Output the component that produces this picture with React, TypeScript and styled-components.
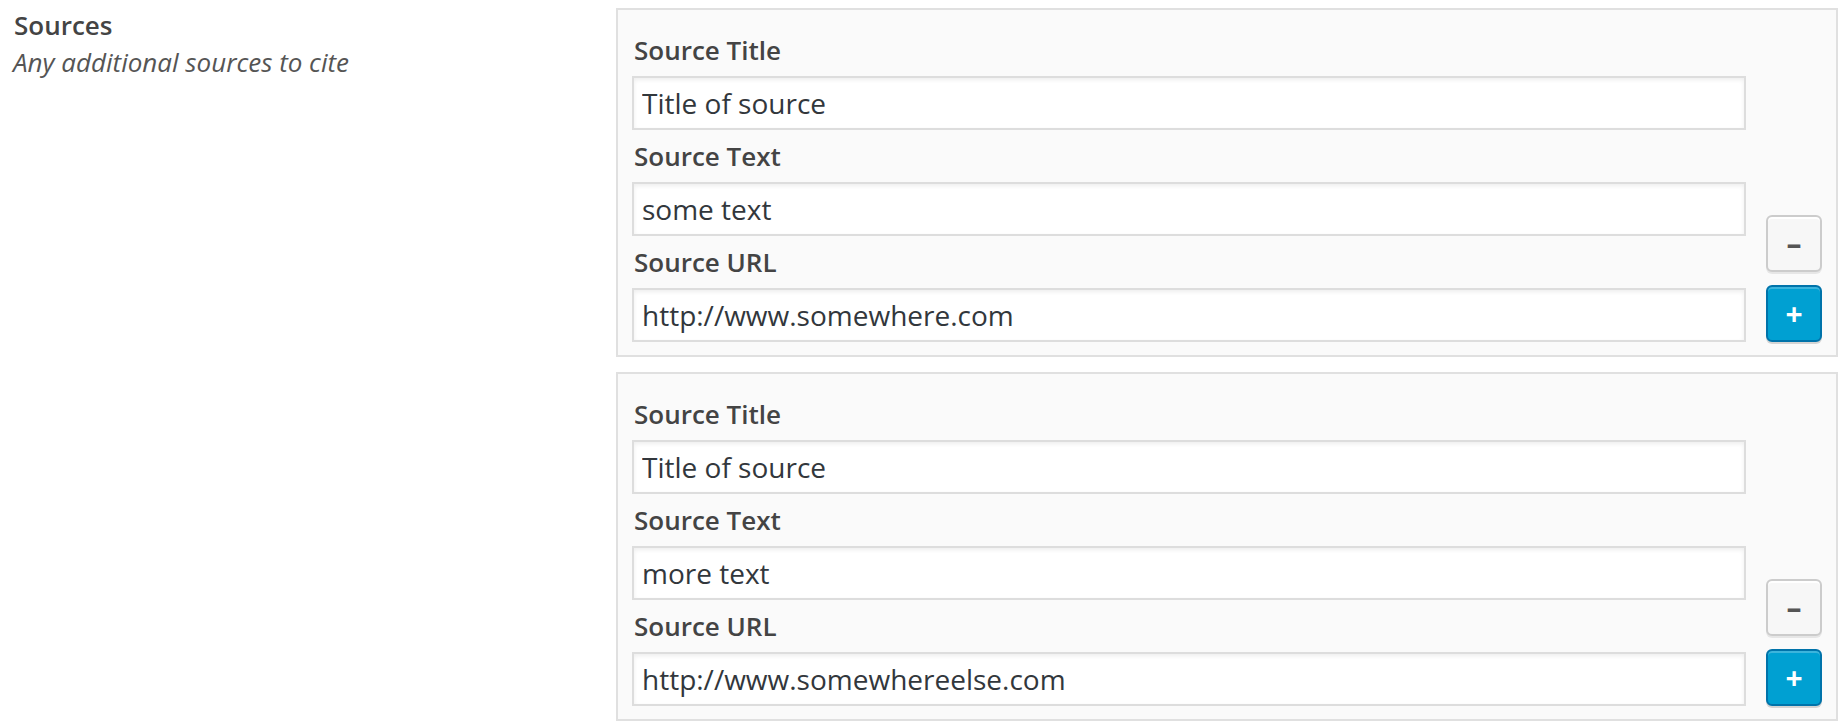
import React from "react";
import styled, { createGlobalStyle } from "styled-components";

const GlobalStyle = createGlobalStyle`
  html, body {
    margin: 0;
    padding: 0;
    background: #ffffff;
  }
  body {
    font-family: "Open Sans", "Noto Sans", sans-serif;
    color: #444444;
  }
  * { box-sizing: border-box; }
`;

const Page = styled.div`
  display: grid;
  grid-template-columns: 616px 1fr;
  padding: 0 6px 0 0;
  width: 1844px;
`;

const Header = styled.div`
  padding: 7px 0 0 14px;
`;

const Title = styled.div`
  font-size: 26px;
  line-height: 36px;
  font-weight: 600;
  color: #444444;
`;

const Description = styled.div`
  font-size: 26px;
  line-height: 36px;
  font-style: italic;
  color: #555555;
  margin-top: 1px;
  margin-left: -1px;
`;

const List = styled.div`
  display: flex;
  flex-direction: column;
  gap: 15px;
  padding-top: 8px;
`;

const Group = styled.div`
  display: flex;
  gap: 20px;
  background: #fafafa;
  border: 2px solid #e0e0e0;
  padding: 14px 14px 13px 14px;
`;

const Fields = styled.div`
  flex: 1;
  display: flex;
  flex-direction: column;
`;

const Label = styled.label`
  display: block;
  margin: 8px 0;
  padding-left: 2px;
  font-size: 26px;
  line-height: 36px;
  font-weight: 600;
  color: #444444;
`;

const Input = styled.input`
  display: block;
  width: 100%;
  height: 54px;
  margin: 0;
  padding: 0 8px;
  border: 2px solid #dddddd;
  background: #ffffff;
  box-shadow: inset 0 2px 4px rgba(0, 0, 0, 0.07);
  font-family: "Open Sans", "Noto Sans", sans-serif;
  font-size: 28px;
  color: #32373c;
  outline: none;
`;

const Actions = styled.div`
  width: 56px;
  display: flex;
  flex-direction: column;
  justify-content: flex-end;
  gap: 13px;
`;

const ActionButton = styled.button<{ $primary?: boolean }>`
  width: 56px;
  height: 57px;
  padding: 0;
  margin: 0;
  border-radius: 6px;
  border: 2px solid ${(p) => (p.$primary ? "#0073aa" : "#cccccc")};
  background: ${(p) => (p.$primary ? "#00a0d2" : "#f7f7f7")};
  box-shadow: ${(p) =>
    p.$primary
      ? "inset 0 2px 0 rgba(120, 200, 230, 0.5), 0 2px 0 rgba(0, 0, 0, 0.15)"
      : "inset 0 2px 0 #ffffff, 0 2px 0 rgba(0, 0, 0, 0.08)"};
  color: ${(p) => (p.$primary ? "#ffffff" : "#555555")};
  font-family: "Open Sans", "Noto Sans", sans-serif;
  font-size: 30px;
  font-weight: 700;
  line-height: 1;
  display: flex;
  align-items: center;
  justify-content: center;
  cursor: pointer;
`;

type Source = { title: string; text: string; url: string };

const sources: Source[] = [
  { title: "Title of source", text: "some text", url: "http://www.somewhere.com" },
  { title: "Title of source", text: "more text", url: "http://www.somewhereelse.com" },
];

function SourceGroup({ source }: { source: Source }) {
  return (
    <Group>
      <Fields>
        <Label>Source Title</Label>
        <Input defaultValue={source.title} />
        <Label>Source Text</Label>
        <Input defaultValue={source.text} />
        <Label>Source URL</Label>
        <Input defaultValue={source.url} />
      </Fields>
      <Actions>
        <ActionButton type="button">–</ActionButton>
        <ActionButton type="button" $primary>+</ActionButton>
      </Actions>
    </Group>
  );
}

export default function App() {
  return (
    <>
      <GlobalStyle />
      <Page>
        <Header>
          <Title>Sources</Title>
          <Description>Any additional sources to cite</Description>
        </Header>
        <List>
          {sources.map((s, i) => (
            <SourceGroup key={i} source={s} />
          ))}
        </List>
      </Page>
    </>
  );
}
